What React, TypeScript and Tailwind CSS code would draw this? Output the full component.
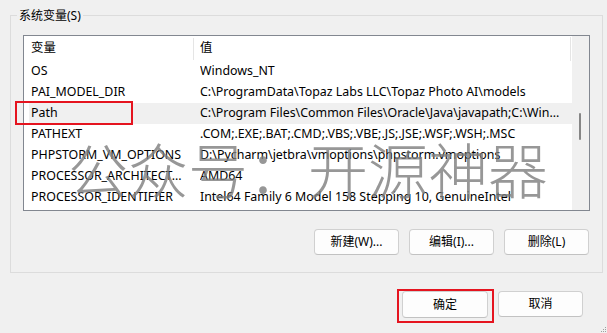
import React from 'react';

type Row = { name: string; value: string; selected?: boolean };

const rows: Row[] = [
  { name: 'OS', value: 'Windows_NT' },
  { name: 'PAI_MODEL_DIR', value: 'C:\\ProgramData\\Topaz Labs LLC\\Topaz Photo AI\\models' },
  { name: 'Path', value: 'C:\\Program Files\\Common Files\\Oracle\\Java\\javapath;C:\\Win...', selected: true },
  { name: 'PATHEXT', value: '.COM;.EXE;.BAT;.CMD;.VBS;.VBE;.JS;.JSE;.WSF;.WSH;.MSC' },
  { name: 'PHPSTORM_VM_OPTIONS', value: 'D:\\Pycharm\\jetbra\\vmoptions\\phpstorm.vmoptions' },
  { name: 'PROCESSOR_ARCHITECT...', value: 'AMD64' },
  { name: 'PROCESSOR_IDENTIFIER', value: 'Intel64 Family 6 Model 158 Stepping 10, GenuineIntel' },
];

const uiFont = '[font-family:"Noto_Sans","Noto_Sans_CJK_SC",sans-serif]';

function WinButton({ label, wide }: { label: string; wide?: boolean }) {
  return (
    <button
      className={`${wide ? 'w-[86px] h-[27px]' : 'w-[85px] h-[26px]'} rounded-[4px] border border-[#d0d0d0] border-b-[#c2c2c2] bg-[#fdfdfd] text-[12px] leading-none text-black`}
    >
      {label}
    </button>
  );
}

export default function App() {
  return (
    <div className={`relative w-[607px] h-[333px] overflow-hidden bg-[#f0f0f0] text-[12px] text-black ${uiFont}`}>
      {/* 系统变量 group box */}
      <fieldset className="mt-[8px] ml-[10px] w-[592px] border border-[#dcdcdc] px-[12px] pb-[17px] pt-[12px]">
        <legend className="-ml-[6px] px-[2px] leading-[15px]">系统变量(S)</legend>

        {/* list view */}
        <div className="flex h-[176px] border border-[#828790] bg-white text-[12.4px]">
          <div className="flex w-[548px] flex-col">
            <div className="flex h-[25px] items-center">
              <span className="w-[169px] pl-[7px]">变量</span>
              <span className="h-[22px] w-px bg-[#e5e5e5]" />
              <span className="flex-1 pl-[6px]">值</span>
              <span className="h-[24px] w-px bg-[#e5e5e5]" />
              <span className="w-px" />
            </div>
            {rows.map((r) => (
              <div
                key={r.name}
                className={`ml-[5px] flex h-[21px] items-center whitespace-nowrap ${r.selected ? 'bg-[#f0f0f0]' : ''}`}
              >
                <span className="w-[171px] pl-[2px]">{r.name}</span>
                <span className="flex-1 overflow-hidden">{r.value}</span>
              </div>
            ))}
          </div>
          {/* scrollbar */}
          <div className="flex w-[17px] flex-col bg-[#f0f0f0] pt-[77px]">
            <div className="ml-[7px] h-[27px] w-[2px] rounded-full bg-[#868686]" />
          </div>
        </div>

        <div className="mt-[18px] flex justify-end gap-[10px] pr-[1px]">
          <WinButton label="新建(W)..." />
          <WinButton label="编辑(I)..." />
          <WinButton label="删除(L)" />
        </div>
      </fieldset>

      {/* dialog buttons */}
      <div className="mt-[18px] flex justify-end gap-[10px] pr-[24px]">
        <div className="relative">
          <WinButton label="确定" wide />
          <div className="pointer-events-none absolute -left-[5px] -top-[2px] -right-[6px] -bottom-[5px] border-2 border-[#e5141f]" />
        </div>
        <WinButton label="取消" />
      </div>

      {/* annotation around Path */}
      <div className="pointer-events-none absolute left-[15px] top-[101px] h-[24px] w-[118px] border-2 border-[#e5141f]" />

      {/* watermark */}
      <div className="pointer-events-none absolute left-[68px] top-[138px] whitespace-nowrap text-[60px] leading-[60px] font-extralight text-[#7d7d7d]/80 [font-family:'Noto_Sans_CJK_SC',sans-serif]">
        公众号：开源神器
      </div>

      {/* resize grip */}
      <svg className="absolute right-0 bottom-0" width="6" height="6" viewBox="0 0 6 6">
        <rect x="4" y="0" width="1" height="1" fill="#a0a0a0" />
        <rect x="2" y="2" width="1" height="1" fill="#a0a0a0" />
        <rect x="4" y="2" width="1" height="1" fill="#a0a0a0" />
        <rect x="0" y="4" width="1" height="1" fill="#a0a0a0" />
        <rect x="2" y="4" width="1" height="1" fill="#a0a0a0" />
        <rect x="4" y="4" width="1" height="1" fill="#a0a0a0" />
      </svg>
    </div>
  );
}
